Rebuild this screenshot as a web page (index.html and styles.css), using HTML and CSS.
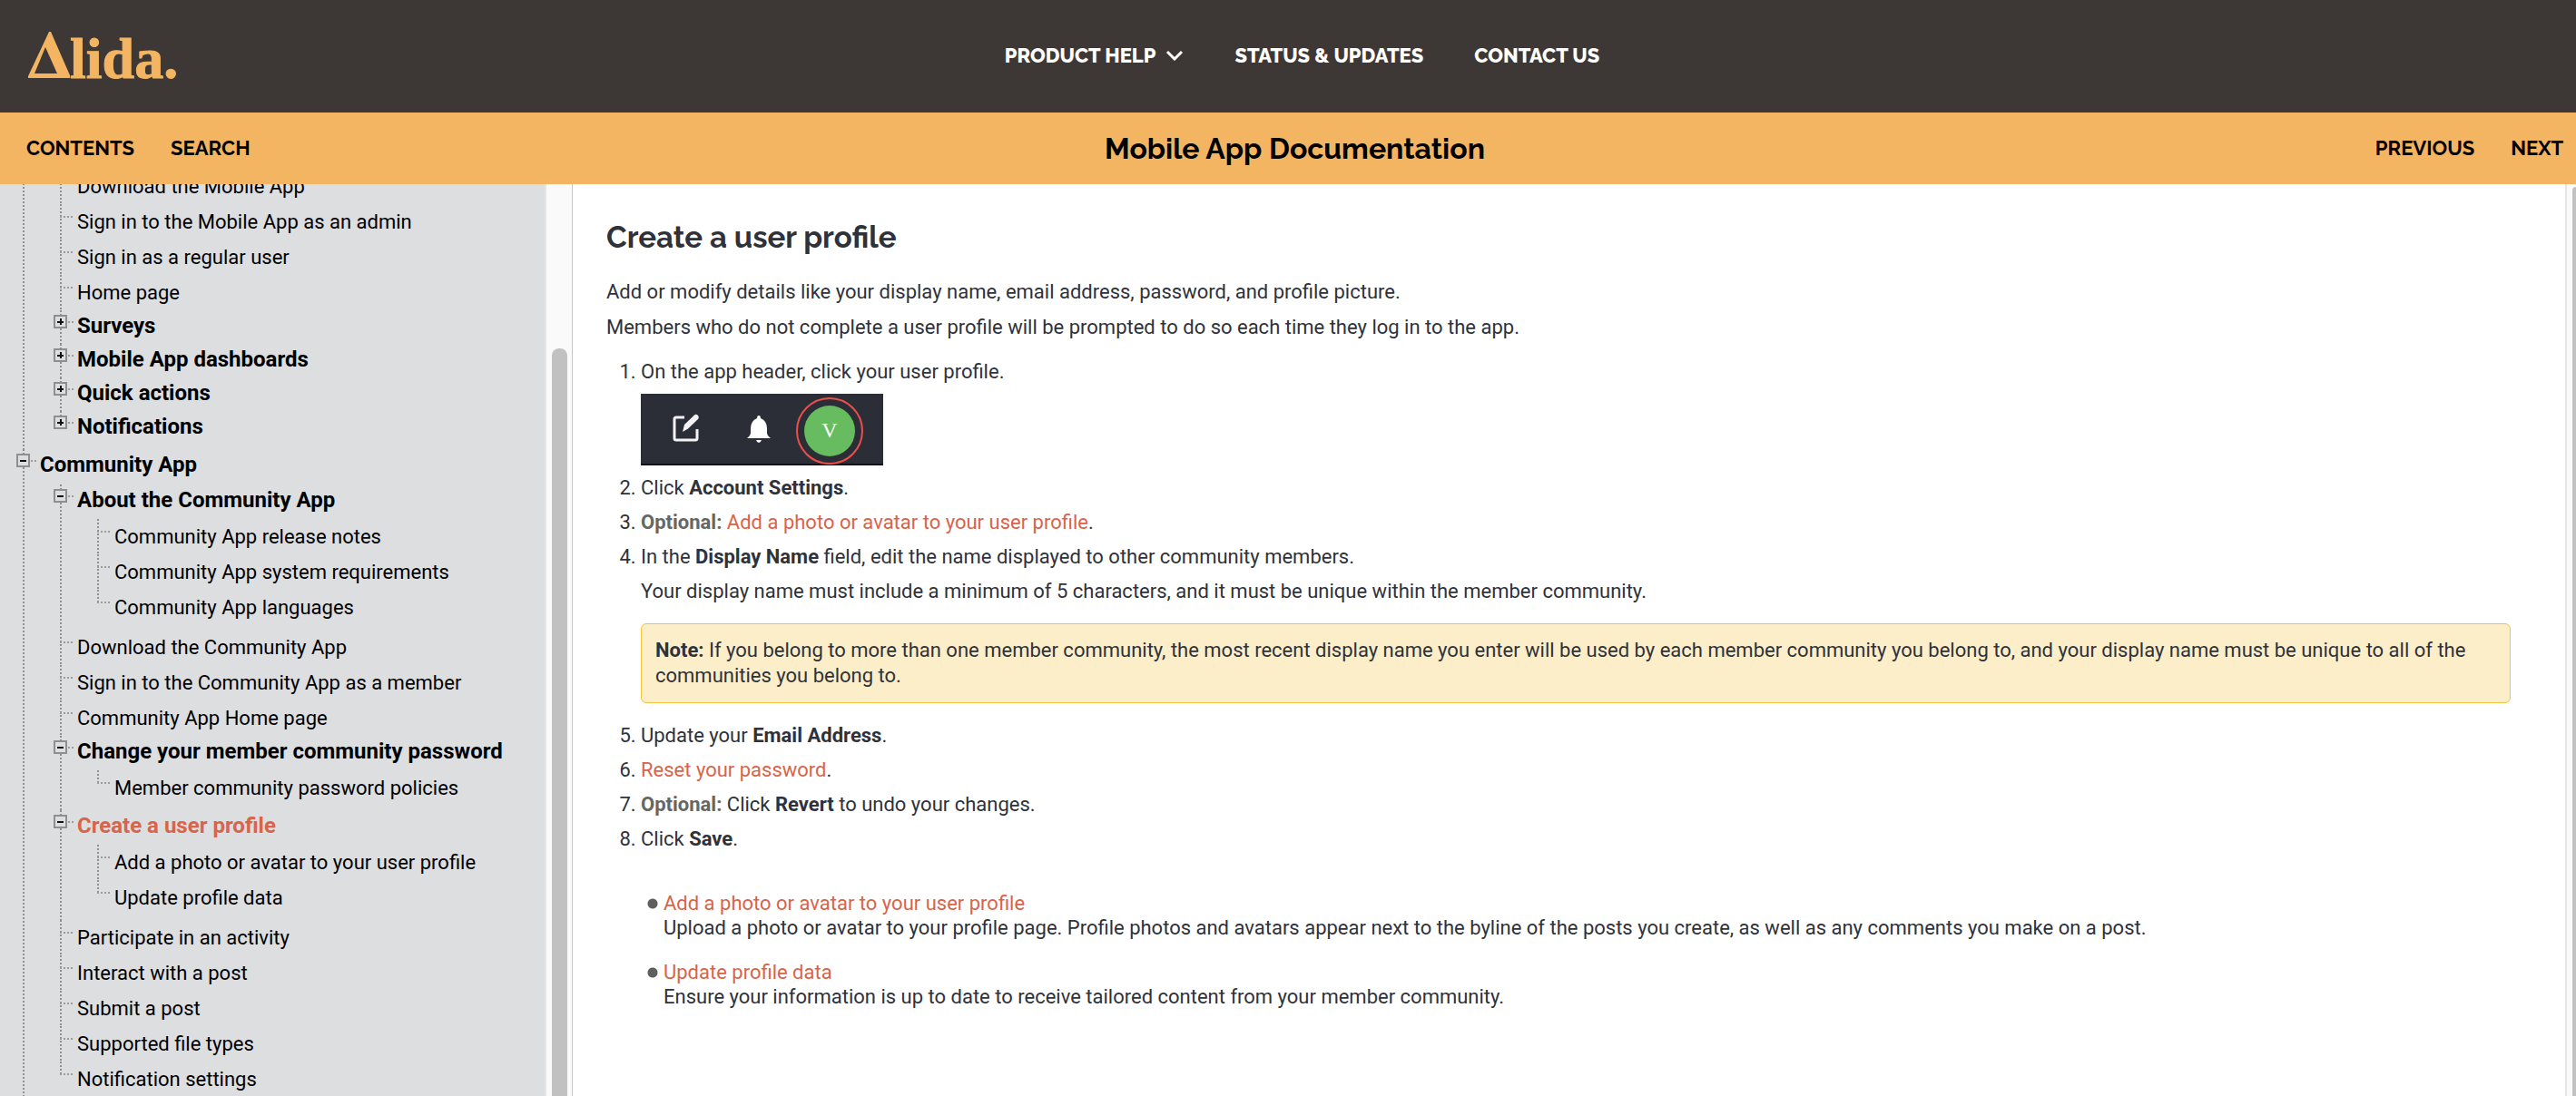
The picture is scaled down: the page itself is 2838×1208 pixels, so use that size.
FILE: index.html
```html
<!DOCTYPE html>
<html lang="en">
<head>
<meta charset="utf-8">
<title>Create a user profile</title>
<link rel="stylesheet" href="styles.css">
</head>
<body>
<header class="site-header">
  <a class="logo" href="#" aria-label="Alida">
    <svg class="logo-delta" viewBox="0 0 46 51" aria-hidden="true"><path fill-rule="evenodd" d="M0 51V49L23 0H25L46 48V51ZM19 17L7 46H32Z"/></svg><span class="logo-text">lida.</span>
  </a>
  <nav class="site-nav">
    <button class="nav-item nav-menu" type="button">PRODUCT HELP
      <svg class="chevron" viewBox="0 0 20 12" aria-hidden="true"><path d="M2 2L10 10L18 2"/></svg>
    </button>
    <a class="nav-item" href="#">STATUS &amp; UPDATES</a>
    <a class="nav-item" href="#">CONTACT US</a>
  </nav>
</header>
<div class="toolbar">
  <div class="toolbar-group"><a href="#">CONTENTS</a><a href="#">SEARCH</a></div>
  <div class="toolbar-title">Mobile App Documentation</div>
  <div class="toolbar-group toolbar-end"><a href="#">PREVIOUS</a><a href="#">NEXT</a></div>
</div>
<div class="workspace">
  <nav class="sidebar" aria-label="Contents">
    <ul class="tree">
      <li class="branch">
        <ul class="children">
          <li><div class="row leaf"><a href="#">Download the Mobile App</a></div></li>
          <li><div class="row leaf"><a href="#">Sign in to the Mobile App as an admin</a></div></li>
          <li><div class="row leaf"><a href="#">Sign in as a regular user</a></div></li>
          <li><div class="row leaf"><a href="#">Home page</a></div></li>
          <li><div class="row topic"><button class="toggle plus" type="button" aria-label="Expand"></button><a href="#">Surveys</a></div></li>
          <li><div class="row topic"><button class="toggle plus" type="button" aria-label="Expand"></button><a href="#">Mobile App dashboards</a></div></li>
          <li><div class="row topic"><button class="toggle plus" type="button" aria-label="Expand"></button><a href="#">Quick actions</a></div></li>
          <li><div class="row topic"><button class="toggle plus" type="button" aria-label="Expand"></button><a href="#">Notifications</a></div></li>
        </ul>
      </li>
      <li class="branch">
        <div class="row topic"><button class="toggle" type="button" aria-label="Collapse"></button><a href="#">Community App</a></div>
        <ul class="children">
          <li>
            <div class="row topic"><button class="toggle" type="button" aria-label="Collapse"></button><a href="#">About the Community App</a></div>
            <ul class="children">
              <li><div class="row leaf"><a href="#">Community App release notes</a></div></li>
              <li><div class="row leaf"><a href="#">Community App system requirements</a></div></li>
              <li><div class="row leaf"><a href="#">Community App languages</a></div></li>
            </ul>
          </li>
          <li><div class="row leaf"><a href="#">Download the Community App</a></div></li>
          <li><div class="row leaf"><a href="#">Sign in to the Community App as a member</a></div></li>
          <li><div class="row leaf"><a href="#">Community App Home page</a></div></li>
          <li>
            <div class="row topic"><button class="toggle" type="button" aria-label="Collapse"></button><a href="#">Change your member community password</a></div>
            <ul class="children">
              <li><div class="row leaf"><a href="#">Member community password policies</a></div></li>
            </ul>
          </li>
          <li>
            <div class="row topic current"><button class="toggle" type="button" aria-label="Collapse"></button><a href="#">Create a user profile</a></div>
            <ul class="children">
              <li><div class="row leaf"><a href="#">Add a photo or avatar to your user profile</a></div></li>
              <li><div class="row leaf"><a href="#">Update profile data</a></div></li>
            </ul>
          </li>
          <li><div class="row leaf"><a href="#">Participate in an activity</a></div></li>
          <li><div class="row leaf"><a href="#">Interact with a post</a></div></li>
          <li><div class="row leaf"><a href="#">Submit a post</a></div></li>
          <li><div class="row leaf"><a href="#">Supported file types</a></div></li>
          <li><div class="row leaf"><a href="#">Notification settings</a></div></li>
        </ul>
      </li>
    </ul>
  </nav>
  <div class="scrollbar scrollbar-left"><div class="thumb"></div></div>
  <main class="article">
    <h1>Create a user profile</h1>
    <p>Add or modify details like your display name, email address, password, and profile picture.</p>
    <p>Members who do not complete a user profile will be prompted to do so each time they log in to the app.</p>
    <ol class="steps">
      <li>On the app header, click your user profile.
        <svg class="shot" viewBox="0 0 267 79" role="img" aria-label="App header with the user profile circled">
          <rect width="267" height="79" fill="#2b2e36"/>
          <rect y="77" width="267" height="2" fill="#12121c"/>
          <path d="M48 26H39Q37 26 37 28V49Q37 51 39 51H60Q62 51 62 49V39" fill="none" stroke="#f4f2f4" stroke-width="3"/>
          <path d="M46 42L48 34L59 23.500Q61 22 63 24Q64.500 26 63 28L52 38.500Z" fill="#f4f2f4"/>
          <path d="M130 24Q132 24 132 27Q139 30 139 38V43Q139 46 143 49H117Q121 46 121 43V38Q121 30 128 27Q128 24 130 24ZM127 51H133Q132 54 130 54Q128 54 127 51Z" fill="#fff"/>
          <circle cx="208" cy="41" r="28" fill="#66bc5f"/>
          <circle cx="208" cy="41" r="36" fill="none" stroke="#ec4f4b" stroke-width="2"/>
          <text class="shot-initial" x="208" y="48" text-anchor="middle">V</text>
        </svg>
      </li>
      <li>Click <b>Account Settings</b>.</li>
      <li><b class="optional">Optional:</b> <a href="#">Add a photo or avatar to your user profile</a>.</li>
      <li>In the <b>Display Name</b> field, edit the name displayed to other community members.
        <p class="info">Your display name must include a minimum of 5 characters, and it must be unique within the member community.</p>
        <div class="note"><b>Note:</b> If you belong to more than one member community, the most recent display name you enter will be used by each member community you belong to, and your display name must be unique to all of the communities you belong to.</div>
      </li>
      <li>Update your <b>Email Address</b>.</li>
      <li><a href="#">Reset your password</a>.</li>
      <li><b class="optional">Optional:</b> Click <b>Revert</b> to undo your changes.</li>
      <li>Click <b>Save</b>.</li>
    </ol>
    <ul class="related">
      <li><a href="#">Add a photo or avatar to your user profile</a><div>Upload a photo or avatar to your profile page. Profile photos and avatars appear next to the byline of the posts you create, as well as any comments you make on a post.</div></li>
      <li><a href="#">Update profile data</a><div>Ensure your information is up to date to receive tailored content from your member community.</div></li>
    </ul>
  </main>
  <div class="scrollbar scrollbar-right"><div class="thumb"></div></div>
</div>
</body>
</html>
```

FILE: styles.css
```css
* { box-sizing: border-box; }

body {
  margin: 0;
  height: 100vh;
  display: flex;
  flex-direction: column;
  overflow: hidden;
  font-family: Roboto, sans-serif;
  font-size: 22px;
  line-height: 27px;
  color: #2f323a;
  background: #fff;
}

ul, ol { margin: 0; padding: 0; }
a { color: #d8644a; text-decoration: none; }
button { font: inherit; border: 0; padding: 0; background: none; }

/* Header */
.site-header {
  display: grid;
  grid-template-columns: 1fr auto 1fr;
  height: 124px;
  flex: none;
  padding-left: 31px;
  background: #3d3835;
  font-family: Raleway, Lato, sans-serif;
}
.logo {
  display: flex;
  align-items: baseline;
  padding-top: 25px;
  color: #f3b562;
  fill: currentColor;
}
.logo-delta { width: 46px; height: 51px; }
.logo-text {
  font: bold 64px/80px "Liberation Serif", serif;
  -webkit-text-stroke: 1px currentColor;
}
.site-nav {
  display: flex;
  align-items: flex-start;
  gap: 56px;
  padding-top: 47px;
}
.nav-item {
  color: #fff;
  font-weight: 800;
  font-size: 22px;
  line-height: 28px;
}
.nav-menu { display: flex; align-items: center; gap: 11px; }
.chevron {
  width: 20px;
  height: 12px;
  fill: none;
  stroke: #fff;
  stroke-width: 3;
}

/* Toolbar */
.toolbar {
  display: grid;
  grid-template-columns: 1fr auto 1fr;
  align-items: center;
  height: 79px;
  flex: none;
  padding: 0 14px 0 29px;
  background: #f3b562;
  font-family: Raleway, Lato, sans-serif;
  font-weight: 700;
}
.toolbar a { color: #000; font-size: 22px; }
.toolbar-group { display: flex; gap: 40px; }
.toolbar-end { justify-content: flex-end; }
.toolbar-title { color: #000; font-size: 32px; line-height: 40px; }

.workspace { flex: 1; display: flex; min-height: 0; }

/* Contents tree */
.sidebar {
  flex: none;
  width: 600px;
  overflow: hidden;
  background: #dddee0;
}
.tree { margin-top: -17px; padding-left: 3px; list-style: none; }
.tree li {
  background: repeating-linear-gradient(to bottom, #8e8f91 0 2px, transparent 2px 4px) 22px 0 / 2px 100% no-repeat;
}
.tree .children > li:last-child { background-size: 2px 14px; }
.children { margin-left: 41px; list-style: none; }
.row + .children { padding-top: 1px; }
.branch > .row + .children { padding-top: 2px; }
.row + .children, .branch > .children { padding-bottom: 5px; }
.row { display: flex; }
.row a { color: #000; }
.leaf {
  padding-left: 41px;
  line-height: 39px;
  background: repeating-linear-gradient(to right, #9b9c9e 0 2px, transparent 2px 4px) 22px 13px / 14px 2px no-repeat;
}
.topic {
  padding-bottom: 2px;
  font-size: 24px;
  line-height: 35px;
  font-weight: 700;
  background: repeating-linear-gradient(to right, #9b9c9e 0 2px, transparent 2px 4px) 31px 12px / 6px 2px no-repeat;
}
.current a { color: #d8644a; }
.toggle {
  flex: none;
  width: 15px;
  height: 15px;
  margin: 5px 11px 0 15px;
  border: 2px solid #8e8f8f;
  background: linear-gradient(#111, #111) center / 7px 2px no-repeat, #dddee0;
}
.plus {
  background: linear-gradient(#111, #111) center / 7px 2px no-repeat, linear-gradient(#111, #111) center / 2px 7px no-repeat, #dddee0;
}

/* Scrollbars */
.scrollbar { flex: none; background: #fafafa; }
.scrollbar-left {
  width: 31px;
  padding: 181px 5px 0 6px;
  border-left: 2px solid #e6e6e6;
  border-right: 1px solid #c8c8c8;
}
.scrollbar-right {
  width: 12px;
  padding: 3px 0 0 6px;
  border-left: 2px solid #e6e6e6;
}
.thumb { height: 100%; background: #c1c1c1; }
.scrollbar-left .thumb { border-radius: 8px 8px 0 0; }
.scrollbar-right .thumb { border-radius: 4px 0 0 0; }

/* Article */
.article { flex: 1; min-width: 0; padding: 39px 60px 0 37px; }
h1 {
  margin: 0 0 26px;
  font-family: Raleway, Lato, sans-serif;
  font-size: 33px;
  line-height: 40px;
  font-weight: 700;
}
p { margin: 0 0 12px; }
.steps { margin-top: 22px; padding-left: 38px; }
.steps li { margin-bottom: 11px; }
.shot { display: block; width: 267px; height: 79px; margin-top: 11px; }
.shot-initial { font: 24px "Liberation Serif", serif; fill: #fff; }
.optional { color: #666; }
.info { margin: 11px 0 22px; }
.note {
  margin-bottom: 22px;
  padding: 15px;
  border: 1px solid #f5c242;
  border-radius: 6px;
  background: #fceec8;
  line-height: 28px;
}
.related { margin-top: 44px; padding-left: 45px; list-style: none; }
.related li {
  margin-bottom: 22px;
  padding-left: 18px;
  background: radial-gradient(circle, #5e5e5e 5px, transparent 6px) 0 8px / 12px 12px no-repeat;
}
```
